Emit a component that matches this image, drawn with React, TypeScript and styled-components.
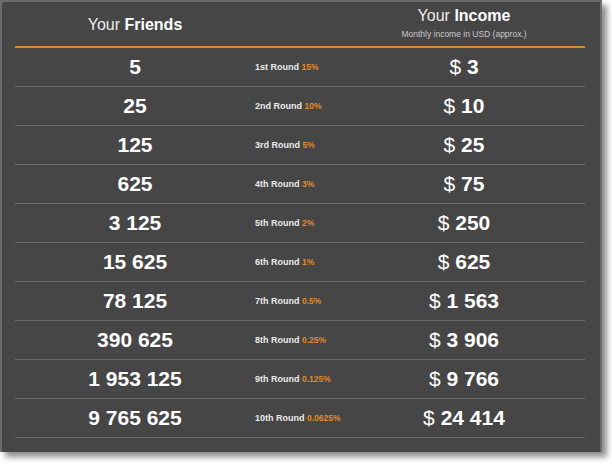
import React from 'react';
import styled, { createGlobalStyle } from 'styled-components';

interface IRow {
  friends: string;
  round: string;
  rate: string;
  income: string;
}

const rows: IRow[] = [
  { friends: '5', round: '1st', rate: '15%', income: '3' },
  { friends: '25', round: '2nd', rate: '10%', income: '10' },
  { friends: '125', round: '3rd', rate: '5%', income: '25' },
  { friends: '625', round: '4th', rate: '3%', income: '75' },
  { friends: '3 125', round: '5th', rate: '2%', income: '250' },
  { friends: '15 625', round: '6th', rate: '1%', income: '625' },
  { friends: '78 125', round: '7th', rate: '0.5%', income: '1 563' },
  { friends: '390 625', round: '8th', rate: '0.25%', income: '3 906' },
  { friends: '1 953 125', round: '9th', rate: '0.125%', income: '9 766' },
  { friends: '9 765 625', round: '10th', rate: '0.0625%', income: '24 414' }
];

const GlobalStyle = createGlobalStyle`
  body {
    margin: 0;
    min-height: 464px;
    background: #fff;
    font-family: "Liberation Sans", Arial, sans-serif;
  }
`;

const App = () => {
  return (
    <>
      <GlobalStyle />
      <Panel>
        <Table>
          <thead>
            <tr>
              <HeadCell $width={240}>
                <HeadTitle>
                  Your <b>Friends</b>
                </HeadTitle>
              </HeadCell>
              <HeadCell $width={88} />
              <HeadCell>
                <HeadTitle $top>
                  Your <b>Income</b>
                </HeadTitle>
                <HeadNote>Monthly income in USD (approx.)</HeadNote>
              </HeadCell>
            </tr>
          </thead>
          <tbody>
            {rows.map(item => (
              <Row key={item.round}>
                <Big>{item.friends}</Big>
                <RoundCell>
                  {item.round} Round <Rate>{item.rate}</Rate>
                </RoundCell>
                <Big>
                  <Dollar>$</Dollar> {item.income}
                </Big>
              </Row>
            ))}
          </tbody>
        </Table>
      </Panel>
    </>
  );
};

export default App;

const Panel = styled.div`
  width: 570px;
  height: 450px;
  padding: 0 15px 0 13px;
  background: #464646;
  border: 2px solid #6c6c6c;
  border-bottom: 0;
  box-shadow: 5px 5px 6px rgba(0, 0, 0, 0.45);
  color: #fff;
`;

const Table = styled.table`
  width: 570px;
  border-collapse: collapse;
  table-layout: fixed;
`;

const HeadCell = styled.th<{ $width?: number }>`
  width: ${p => (p.$width ? `${p.$width}px` : 'auto')};
  height: 44px;
  padding: 0;
  border-bottom: 2px solid #d68a2e;
  text-align: center;
  vertical-align: top;
  font-weight: normal;
`;

const HeadTitle = styled.div<{ $top?: boolean }>`
  margin-top: ${p => (p.$top ? '5px' : '14px')};
  font-size: 16px;
  line-height: 18px;
  color: #ececec;
  b {
    color: #fff;
  }
`;

const HeadNote = styled.div`
  margin-top: 4px;
  font-size: 8.5px;
  line-height: 10px;
  color: #c8c8c8;
`;

const Row = styled.tr`
  height: 39px;
  border-bottom: 1px solid #6a6a6a;
  td {
    padding: 0;
  }
`;

const Big = styled.td`
  text-align: center;
  font-size: 21px;
  font-weight: bold;
  color: #fff;
`;

const Dollar = styled.span`
  font-weight: normal;
`;

const RoundCell = styled.td`
  text-align: left;
  font-size: 9px;
  font-weight: bold;
  color: #eaeaea;
  white-space: nowrap;
`;

const Rate = styled.span`
  font-size: 8.5px;
  color: #e08a2a;
`;
